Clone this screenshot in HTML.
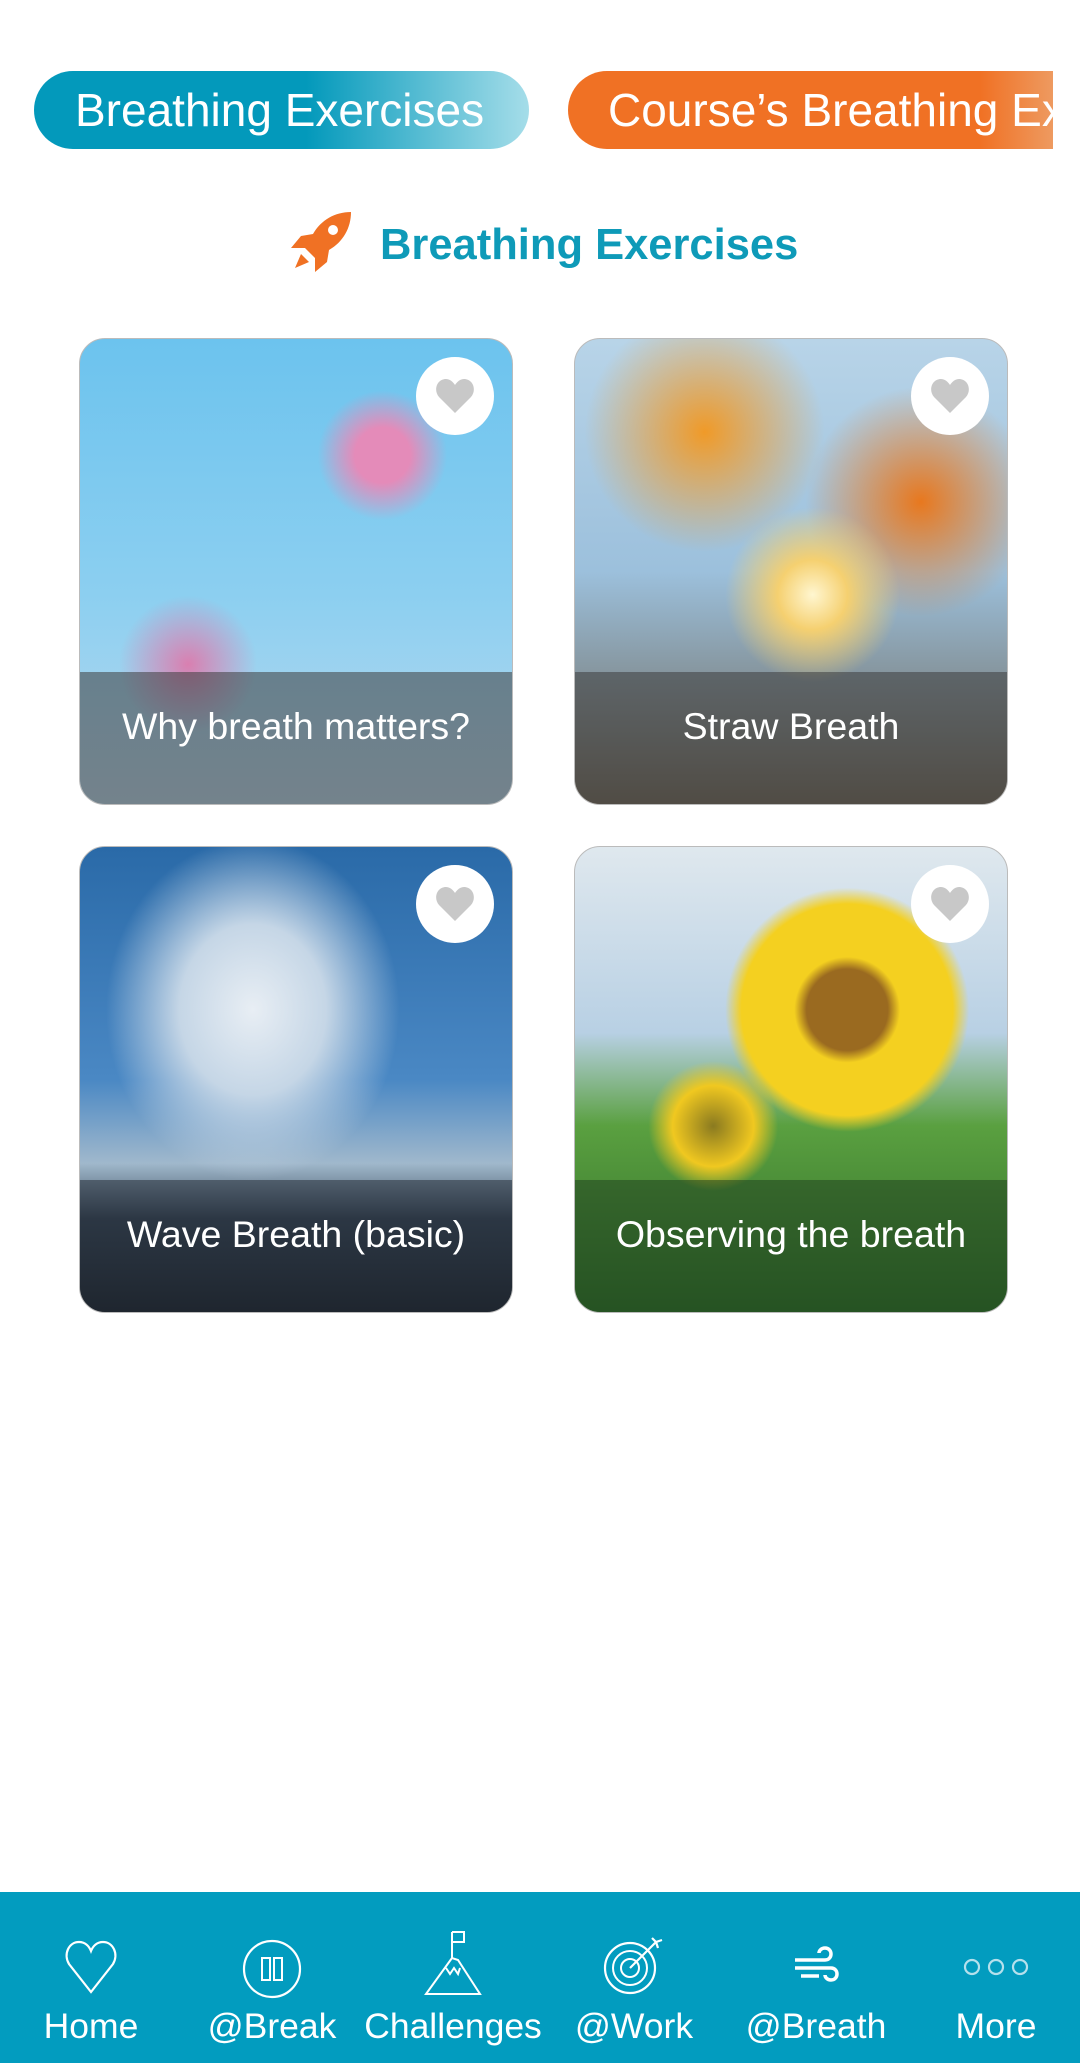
<!DOCTYPE html>
<html><head><meta charset="utf-8"><style>
*{margin:0;padding:0;box-sizing:border-box}
body{width:1080px;height:2063px;background:#fff;position:relative;overflow:hidden;font-family:"Liberation Sans",sans-serif}
.tab{position:absolute;top:71px;height:78px;border-radius:39px;color:#fff;font-size:46px;line-height:78px;white-space:nowrap;overflow:hidden}
.card{position:absolute;width:434px;height:467px;border-radius:26px;overflow:hidden;border:1px solid #bbb}
.cap{position:absolute;left:0;right:0;bottom:0;height:132px;background:rgba(60,60,60,.55);color:#fff;font-size:37.5px;text-align:center;line-height:108px}
.heart{position:absolute;right:18px;top:18px;width:78px;height:78px;border-radius:50%;background:#fff}
.heart svg{position:absolute;left:19px;top:21px}
.nav{position:absolute;left:0;top:1892px;width:1080px;height:171px;background:#029cbf}
.lab{position:absolute;top:114px;color:#fff;font-size:35.5px;transform:translateX(-50%);white-space:nowrap}
.ic{position:absolute;top:46px;transform:translateX(-50%)}
</style></head><body>
<div class="tab" style="left:34px;width:495px;background:linear-gradient(90deg,#0399bb 0%,#0399bb 55%,#a5dde9 100%);padding-left:41px">Breathing Exercises</div>
<div class="tab" style="left:568px;width:485px;border-radius:39px 0 0 39px;background:linear-gradient(90deg,#f07124 0%,#f07124 85%,#ee9a60 100%);padding-left:40px">Course’s Breathing Exercises</div>
<svg style="position:absolute;left:287px;top:210px" width="66" height="66" viewBox="0 0 66 66"><path d="M64 2 C48 2 34 10 26 24 L14 26 L4 38 L18 38 L28 48 L28 62 L40 52 L42 40 C56 32 64 18 64 2Z" fill="#f07124"/><circle cx="46" cy="20" r="5" fill="#fff"/><path d="M14 44 L8 58 L22 52 Z" fill="#f07124"/></svg>
<div style="position:absolute;left:380px;top:221px;font-size:43.5px;font-weight:bold;color:#0e9ab8">Breathing Exercises</div>

<div class="card" style="left:79px;top:338px;background:radial-gradient(circle at 70% 25%,#e48bb9 0,#e48bb9 6%,transparent 14%),radial-gradient(circle at 25% 70%,#d97fb0 0,transparent 15%),linear-gradient(180deg,#6cc3ee 0%,#8ccff0 55%,#b8d9ee 100%)"><div class="heart"><svg width="40" height="36" viewBox="0 0 40 36"><path d="M20 35 L4 19 C-2 12 2 1 11 1 C15 1 18 4 20 7 C22 4 25 1 29 1 C38 1 42 12 36 19Z" fill="#c8c8c8"/></svg></div><div class="cap">Why breath matters?</div></div>
<div class="card" style="left:574px;top:338px;background:radial-gradient(circle at 55% 55%,#fff6d0 0,#f5d070 10%,transparent 25%),radial-gradient(circle at 30% 20%,#f09a28 0,transparent 25%),radial-gradient(circle at 80% 35%,#e8781e 0,transparent 25%),linear-gradient(180deg,#b8d4e8 0%,#9cc0dc 50%,#6a6050 100%)"><div class="heart"><svg width="40" height="36" viewBox="0 0 40 36"><path d="M20 35 L4 19 C-2 12 2 1 11 1 C15 1 18 4 20 7 C22 4 25 1 29 1 C38 1 42 12 36 19Z" fill="#c8c8c8"/></svg></div><div class="cap">Straw Breath</div></div>
<div class="card" style="left:79px;top:846px;background:radial-gradient(ellipse at 40% 35%,#e8eef4 0,#c5d6e6 20%,transparent 40%),linear-gradient(180deg,#2a6aa8 0%,#4a88c4 50%,#a0b8cc 68%,#3a4a5a 80%,#202830 100%)"><div class="heart"><svg width="40" height="36" viewBox="0 0 40 36"><path d="M20 35 L4 19 C-2 12 2 1 11 1 C15 1 18 4 20 7 C22 4 25 1 29 1 C38 1 42 12 36 19Z" fill="#c8c8c8"/></svg></div><div class="cap" style="background:rgba(30,35,45,.5)">Wave Breath (basic)</div></div>
<div class="card" style="left:574px;top:846px;background:radial-gradient(circle at 63% 35%,#9a6a20 0,#9a6a20 10%,#f4d020 13%,#f4d020 26%,transparent 30%),radial-gradient(circle at 32% 60%,#8a7a20 0,#f0c820 10%,transparent 16%),linear-gradient(180deg,#dfe8ee 0%,#b8d0e4 40%,#5aa040 60%,#2e6a28 100%)"><div class="heart"><svg width="40" height="36" viewBox="0 0 40 36"><path d="M20 35 L4 19 C-2 12 2 1 11 1 C15 1 18 4 20 7 C22 4 25 1 29 1 C38 1 42 12 36 19Z" fill="#c8c8c8"/></svg></div><div class="cap" style="background:rgba(30,60,30,.5)">Observing the breath</div></div>

<div class="nav">
<svg class="ic" style="left:91px" width="60" height="60" viewBox="0 0 60 60"><path d="M30 54 L8 26 C2 16 8 4 18 4 C24 4 28 8 30 13 C32 8 36 4 42 4 C52 4 58 16 52 26Z" fill="none" stroke="#fff" stroke-width="2.2"/></svg>
<svg class="ic" style="left:272px" width="62" height="62" viewBox="0 0 62 62"><circle cx="31" cy="31" r="28" fill="none" stroke="#fff" stroke-width="2.2"/><rect x="21" y="20" width="8" height="22" fill="none" stroke="#fff" stroke-width="2"/><rect x="33" y="20" width="8" height="22" fill="none" stroke="#fff" stroke-width="2"/></svg>
<svg class="ic" style="left:453px;top:38px" width="62" height="66" viewBox="0 0 62 66"><path d="M30 2 L30 28 M30 2 L42 2 L42 12 L30 12" fill="none" stroke="#fff" stroke-width="2"/><path d="M30 28 L4 64 L58 64 L36 30 Z M24 38 L28 44 L32 38 L36 44 L38 38" fill="none" stroke="#fff" stroke-width="2"/></svg>
<svg class="ic" style="left:634px;top:40px" width="64" height="64" viewBox="0 0 64 64"><circle cx="28" cy="36" r="25" fill="none" stroke="#fff" stroke-width="2.2"/><circle cx="28" cy="36" r="17" fill="none" stroke="#fff" stroke-width="2"/><circle cx="28" cy="36" r="9" fill="none" stroke="#fff" stroke-width="2"/><path d="M28 36 L54 10 M50 6 L54 10 L60 8 M54 10 L56 16" fill="none" stroke="#fff" stroke-width="2.2"/></svg>
<svg class="ic" style="left:816px;top:50px" width="50" height="50" viewBox="0 0 50 50"><path d="M4 18 L34 18 C42 18 42 6 34 6 C30 6 28 9 28 11 M4 26 L40 26 C48 26 48 38 40 38 C36 38 34 35 34 33 M10 34 L28 34" fill="none" stroke="#fff" stroke-width="3.5"/></svg>
<svg class="ic" style="left:996px;top:64px" width="70" height="22" viewBox="0 0 70 22"><circle cx="11" cy="11" r="7" fill="none" stroke="#b5e0ec" stroke-width="2.2"/><circle cx="35" cy="11" r="7" fill="none" stroke="#b5e0ec" stroke-width="2.2"/><circle cx="59" cy="11" r="7" fill="none" stroke="#b5e0ec" stroke-width="2.2"/></svg>
<div class="lab" style="left:91px">Home</div>
<div class="lab" style="left:272px">@Break</div>
<div class="lab" style="left:453px">Challenges</div>
<div class="lab" style="left:634px">@Work</div>
<div class="lab" style="left:816px">@Breath</div>
<div class="lab" style="left:996px">More</div>
</div>
</body></html>
